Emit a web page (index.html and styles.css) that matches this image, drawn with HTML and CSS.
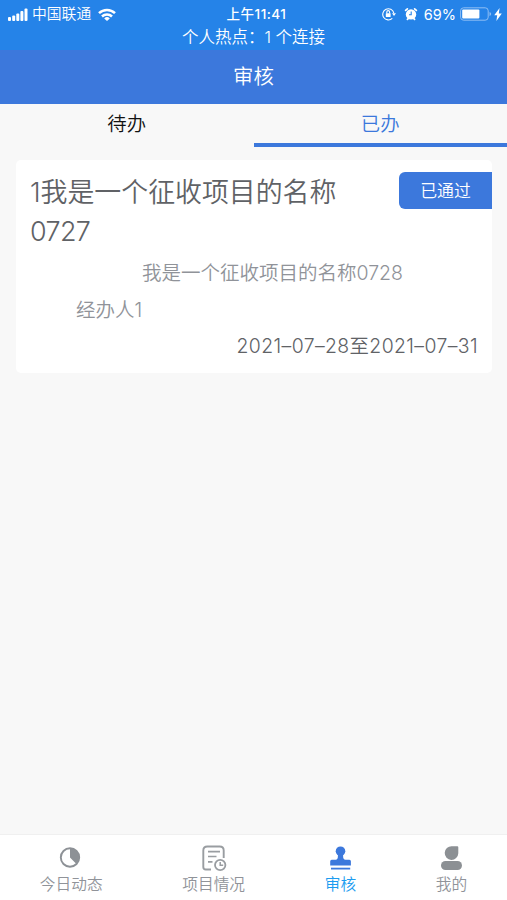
FILE: index.html
```html
<!DOCTYPE html>
<html lang="zh-CN">
<head>
<meta charset="utf-8">
<meta name="viewport" content="width=device-width, initial-scale=1">
<title>审核</title>
<link rel="stylesheet" href="styles.css">
</head>
<body>
<header class="status">
  <div class="status-row">
    <div class="status-left">
      <svg class="signal" viewBox="0 0 20 13" fill="#fff"><rect x="0" y="9" width="3" height="4" rx="1"/><rect x="4.2" y="7.5" width="3" height="5.5" rx="1"/><rect x="8.3" y="5.5" width="3" height="7.5" rx="1"/><rect x="12.4" y="3" width="3" height="10" rx="1"/><rect x="16.5" y="0.5" width="3" height="12.5" rx="1"/></svg>
      <span class="carrier">中国联通</span>
      <svg class="wifi" viewBox="0 0 18 13" fill="none" stroke="#fff" stroke-width="2.5"><path d="M1 5.2a11.5 11.5 0 0 1 16 0M4 8.5a7.2 7.2 0 0 1 10 0"/><path d="M9 12.9L6.2 10.4a4 4 0 0 1 5.6 0z" fill="#fff" stroke="none"/></svg>
    </div>
    <span class="time">上午11:41</span>
    <div class="status-right">
      <svg class="lock" viewBox="0 0 14 14" fill="none" stroke="#fff" stroke-width="1.1"><path d="M10.3 11.3A5.6 5.6 0 1 1 11.8 6"/><path d="M10 6.2h4l-2 2.7z" fill="#fff" stroke="none"/><rect x="3.8" y="6.2" width="4.8" height="3.8" rx=".5" fill="#fff" stroke="none"/><path d="M4.8 6.4V5a1.4 1.4 0 0 1 2.8 0v1.4"/></svg>
      <svg class="alarm" viewBox="0 0 14 14"><circle cx="7" cy="7.4" r="5.2" fill="#fff"/><path d="M1.6 3.4L3.4 1.8M12.4 3.4L10.6 1.8M3.4 12.4l1-1M10.6 12.4l-1-1" stroke="#fff" stroke-width="1.7" stroke-linecap="round"/><path d="M7.2 4.5v3.3L5 7.8" fill="none" stroke="#2583e8" stroke-width="1.1"/></svg>
      <span class="percent">69%</span>
      <svg class="battery" viewBox="0 0 32 14"><rect x=".6" y=".8" width="27.6" height="12.4" rx="3" fill="none" stroke="#8fbef4"/><rect x="2.2" y="2.4" width="17.2" height="9.2" rx="1" fill="#fff"/><path d="M29.5 5v4q1.7-.6 1.7-2t-1.7-2" fill="#8fbef4"/></svg>
      <svg class="bolt" viewBox="0 0 8 13" fill="#fff"><path d="M5.6 0L.2 7.2h3L2.4 13 7.8 5.4h-3z"/></svg>
    </div>
  </div>
  <div class="hotspot">个人热点：1 个连接</div>
</header>
<h1 class="navbar">审核</h1>
<nav class="tabs">
  <div class="tab">待办</div>
  <div class="tab tab-active">已办</div>
</nav>
<main class="content">
  <article class="card">
    <div class="card-head">
      <h2 class="card-title">1我是一个征收项目的名称<br><span class="title-num">0727</span></h2>
      <span class="badge">已通过</span>
    </div>
    <p class="project">我是一个征收项目的名称0728</p>
    <p class="handler">经办人1</p>
    <p class="dates">2021–07–28至2021–07–31</p>
  </article>
</main>
<footer class="tabbar">
  <div class="item">
    <svg class="icon" viewBox="0 0 28 28"><circle cx="13" cy="13.5" r="9.2" fill="none" stroke="#8d9196" stroke-width="1.9"/><path d="M13 4.5a9 9 0 0 1 6.4 15.4L13 13.5z" fill="#8d9196"/></svg>
    <span>今日动态</span>
  </div>
  <div class="item">
    <svg class="icon" viewBox="0 0 28 28" fill="none" stroke="#999da1" stroke-width="1.9"><path d="M11 25.5H5.8q-2.5 0-2.5-2.5V6.5q0-4 4-4h12.4q4 0 4 4V14"/><path d="M8 7.6h12M8 12.5h8.5M8 17.8h4.5" stroke-width="1.7"/><circle cx="20.2" cy="21" r="5.2" stroke-width="1.8"/><path d="M20.2 18v3.3h3" stroke-width="1.5"/></svg>
    <span>项目情况</span>
  </div>
  <div class="item item-active">
    <svg class="icon" viewBox="0 0 28 28" fill="#3c78dc"><circle cx="14.5" cy="7.2" r="4.8"/><path d="M11.9 10h5.2v2q0 3.8 2.3 3.8h4q1.5 0 1.5 1.5v4.2H4.2v-4.2q0-1.5 1.5-1.5h4q2.2 0 2.2-3.8z"/><path d="M5 23.7h19.2v1.8H5z"/></svg>
    <span>审核</span>
  </div>
  <div class="item">
    <svg class="icon" viewBox="0 0 28 28" fill="#8c9094"><path d="M14.8 2.3h5.5q1 0 1 1v6a6.8 6.8 0 1 1-6.5-7z"/><rect x="4" y="17" width="21" height="9" rx="4.5"/></svg>
    <span>我的</span>
  </div>
</footer>
</body>
</html>
```
FILE: styles.css
```css
* { box-sizing: border-box; }

body {
  margin: 0;
  height: 900px;
  display: flex;
  flex-direction: column;
  background: #f8f8f8;
  color: #606266;
  font-family: Inter, "Noto Sans CJK SC", sans-serif;
  font-weight: 350;
  overflow: hidden;
}

h1, h2, p { margin: 0; font-weight: 350; }
svg { display: block; flex: none; }

.status {
  height: 50px;
  flex: none;
  background: #2583e8;
  color: #fff;
}
.status-row {
  height: 27px;
  padding: 0 5px 0 8px;
  display: grid;
  grid-template-columns: 1fr auto 1fr;
  align-items: center;
  line-height: 27px;
}
.status-left, .status-right { display: flex; align-items: center; }
.status-right { justify-content: flex-end; }
.signal { width: 20px; height: 13px; margin-right: 4px; }
.carrier { font-size: 14.8px; }
.wifi { width: 18px; height: 13px; margin-left: 7px; }
.time { font-size: 13.5px; font-weight: 500; letter-spacing: 0.5px; padding: 1px 0 0 3px; }
.lock { width: 14px; height: 14px; margin-right: 8px; }
.alarm { width: 14px; height: 14px; margin-right: 6px; }
.percent { font-size: 14.5px; font-weight: 400; }
.battery { width: 32px; height: 14px; margin-left: 4px; }
.bolt { width: 8px; height: 13px; margin-left: 2px; }
.hotspot {
  font-size: 16.5px;
  line-height: 20px;
  text-align: center;
}

.navbar {
  height: 54px;
  flex: none;
  background: #3c78dc;
  color: #fff;
  font-size: 20.4px;
  line-height: 54px;
  text-align: center;
}

.tabs { height: 43px; flex: none; display: flex; }
.tab {
  flex: 1;
  color: #111;
  font-size: 19.4px;
  line-height: 40px;
  text-align: center;
}
.tab-active {
  color: #3c78dc;
  border-bottom: 4px solid #3c78dc;
}

.content { flex: 1; padding: 13px 15px 0 16px; }
.card {
  height: 213px;
  padding-top: 12px;
  background: #fff;
  border-radius: 5px;
}
.card-head {
  display: flex;
  justify-content: space-between;
  align-items: flex-start;
  padding-left: 14px;
}
.card-title { font-size: 26.9px; line-height: 39px; white-space: nowrap; padding-top: 1px; }
.title-num { letter-spacing: -0.6px; }
.badge {
  width: 93px;
  height: 37px;
  border-radius: 6px 0 0 6px;
  background: #3c78dc;
  color: #fff;
  font-size: 16.9px;
  line-height: 38px;
  text-align: center;
}
.project, .handler { color: #909399; font-size: 19.5px; line-height: 37px; }
.project { padding-left: 126px; margin-top: 4px; }
.handler { padding-left: 60px; }
.dates {
  padding-right: 14px;
  font-size: 19.4px;
  line-height: 35px;
  letter-spacing: 0.4px;
  text-align: right;
}

.tabbar {
  height: 66px;
  flex: none;
  display: flex;
  justify-content: space-around;
  background: #fff;
  border-top: 1px solid #f0f0f0;
}
.item {
  display: flex;
  flex-direction: column;
  align-items: center;
  padding-top: 9px;
  color: #909399;
  font-size: 15.7px;
  line-height: 26px;
}
.item-active { color: #1c9cf0; }
.icon { width: 28px; height: 28px; }
```
